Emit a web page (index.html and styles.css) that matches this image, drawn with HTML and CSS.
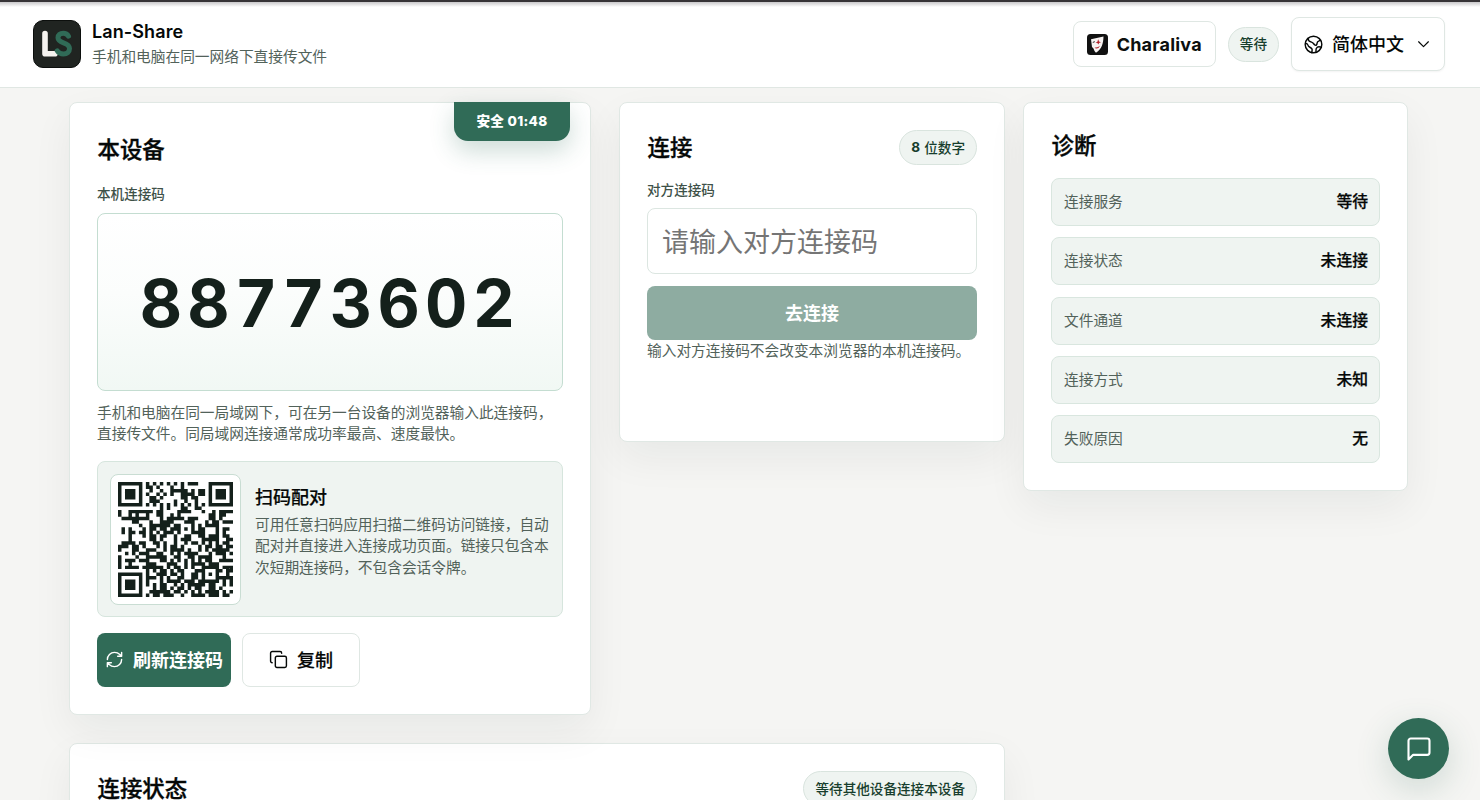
FILE: index.html
```html
<!DOCTYPE html>
<html lang="zh-CN">
<head>
    <meta charset="UTF-8">
    <meta name="viewport" content="width=device-width, initial-scale=1.0">
    <title>Lan-Share</title>
    <link rel="stylesheet" href="styles.css">
</head>
<body>
    <header class="header">
        <div class="brand">
            <svg class="logo" viewBox="0 0 48 48" fill="none" stroke-linecap="round" stroke-linejoin="round">
                <rect x="0.5" y="0.5" width="47" height="47" rx="9.5" fill="#202421" stroke="#0c0f0d"/>
                <path d="M12 13.500v20.200h10" stroke="#f5f3ef" stroke-width="5.600"/>
                <path d="M35.500 16.200c-1.300-2.200-3.300-2.900-5.200-2.900-3.300 0-5.300 1.700-5.300 4.500 0 6.500 11.500 3.400 11.500 10.800 0 3.500-2.500 5.400-6 5.400-2.700 0-4.900-.9-6.300-3.200" stroke="#306b57" stroke-width="5"/>
            </svg>
            <div>
                <h1>Lan-Share</h1>
                <p>手机和电脑在同一网络下直接传文件</p>
            </div>
        </div>
        <div class="header-actions">
            <a class="charaliva" href="#">
                <svg width="21" height="21" viewBox="0 0 21 21">
                    <rect width="21" height="21" rx="3.500" fill="#111"/>
                    <path d="M4 5.200L16.500 2.500C16.300 9 15 15 9 18.800 7.500 17.500 7 16 6.500 14.500L5 13z" fill="#f7f3f2"/>
                    <path d="M11.200 5.200l.8 2.400 2 .6-2 .9-.5 1.500-1.200-1.500-1.800-.2 1.900-1.200zM7.500 13.300q3 .8 5.500-1.600-1.500 3.500-4.300 2.800z" fill="#b3202a"/>
                    <path d="M5.800 8.400l2-.7" stroke="#222" stroke-width="1"/>
                </svg>
                Charaliva
            </a>
            <span class="pill">等待</span>
            <button class="language">
                <svg class="icon globe" viewBox="0 0 24 24">
                    <circle cx="12" cy="12" r="10.500"/>
                    <path d="M5 4.500c.5 3 2 4 4.500 4.500s2.500 2.500 4 3.500c2 1 3-.5 3-2s1-2.500 2.500-3l2-1M2 10.500c3 .5 3 2 3.500 3.500s3.500 1.500 4.500 3.500-.5 3 0 5M22 15.500c-3-1-5.500-.5-6.500 1.500-.7 1.500 0 3-.5 5"/>
                </svg>
                <span>简体中文</span>
                <svg class="icon chevron" viewBox="0 0 24 24"><path d="M3 7l9 9 9-9"/></svg>
            </button>
        </div>
    </header>

    <main class="container">
        <div class="left">
            <!-- This device -->
            <section class="card device">
                <div class="timer">安全 01:48</div>
                <h2>本设备</h2>
                <p class="label">本机连接码</p>
                <div class="code">88773602</div>
                <p class="text">手机和电脑在同一局域网下，可在另一台设备的浏览器输入此连接码，直接传文件。同局域网连接通常成功率最高、速度最快。</p>
                <div class="scan">
                    <div class="qr-box">
                        <svg id="qr" viewBox="0 0 33 33"></svg>
                    </div>
                    <div class="scan-info">
                        <h3>扫码配对</h3>
                        <p class="text">可用任意扫码应用扫描二维码访问链接，自动配对并直接进入连接成功页面。链接只包含本次短期连接码，不包含会话令牌。</p>
                    </div>
                </div>
                <div class="buttons">
                    <button class="btn primary refresh">
                        <svg class="icon" viewBox="0 0 24 24"><path d="M3 12a9 9 0 0 1 9-9 9.750 9.750 0 0 1 6.740 2.740L21 8M21 3v5h-5M21 12a9 9 0 0 1-9 9 9.750 9.750 0 0 1-6.740-2.740L3 16M8 16H3v5"/></svg>
                        <span>刷新连接码</span>
                    </button>
                    <button class="btn copy">
                        <svg class="icon" viewBox="0 0 24 24"><rect x="8" y="8" width="14" height="14" rx="2"/><path d="M4 16c-1.100 0-2-.9-2-2V4c0-1.100.9-2 2-2h10c1.100 0 2 .9 2 2"/></svg>
                        <span>复制</span>
                    </button>
                </div>
            </section>

            <!-- Connect to another device -->
            <section class="card connect">
                <div class="card-head">
                    <h2>连接</h2>
                    <span class="pill"><b>8</b>位数字</span>
                </div>
                <label class="label" for="peerCode">对方连接码</label>
                <input type="text" id="peerCode" placeholder="请输入对方连接码">
                <button class="btn primary" disabled><span>去连接</span></button>
                <p class="text">输入对方连接码不会改变本浏览器的本机连接码。</p>
            </section>

            <section class="card status">
                <div class="card-head">
                    <h2>连接状态</h2>
                    <span class="pill">等待其他设备连接本设备</span>
                </div>
            </section>
        </div>

        <!-- Diagnostics -->
        <section class="card diagnostics">
            <h2>诊断</h2>
            <div class="row"><span>连接服务</span><b>等待</b></div>
            <div class="row"><span>连接状态</span><b>未连接</b></div>
            <div class="row"><span>文件通道</span><b>未连接</b></div>
            <div class="row"><span>连接方式</span><b>未知</b></div>
            <div class="row"><span>失败原因</span><b>无</b></div>
        </section>
    </main>

    <button class="chat" aria-label="反馈">
        <svg class="icon" viewBox="0 0 24 24"><path d="M21 15a2 2 0 0 1-2 2H7l-4 4V5a2 2 0 0 1 2-2h14a2 2 0 0 1 2 2z"/></svg>
    </button>

    <script>
        var rows = [
            '#######.#.#.#.#.#.#.###...#######',
            '#.....#.##.#...#..#.......#.....#',
            '#.###.#..#..#..#####.#.##.#.###.#',
            '#.###.#.#..#.#.#..####.##.#.###.#',
            '#.###.#..##.#.....##.##...#.###.#',
            '#.....#..###....#..#..#...#.....#',
            '#######.#.#.#.#.#.#.#.#.#.#######',
            '............#.#...##..##.........',
            '#..#######.##....####...#..#.####',
            '#..#.#..#..##..#.#........##.##..',
            '.########...#.#####.###...##.#...',
            '....##...#..####...###...#.##.###',
            '......#..######.##...#.#.####....',
            '.#.#...#.##.##.###.#.#.##...#.##.',
            '.#.##.##.#.#.###.#...####...#.#..',
            '...#...#.##.##..#..##..##.###.##.',
            '...#.....##.#...#.###...#####..##',
            '.####.##..##.#..#..#.##.#.#.#.##.',
            '###.##.#...#.#.##.#....#.##.##.##',
            '#...##..###..#.####.#..#.#.#####.',
            '..#.#.###..##..#.#.####...#.###.#',
            '#....#..######..##..##.####...#..',
            '#.###.###...##.#.#.#.#.#.##..####',
            '#..#....###...###..#.####.###....',
            '#.####.######.#.##.#.#..#####.###',
            '........#.#.##.#.##...###...##.##',
            '#######.#..###.##.#..##.#.#.#..#.',
            '#.....#.###.#.#..##..##.#...#####',
            '#.###.#.#...#.####.###.######.#.#',
            '#.###.#.#.#.##..#.#.#####.##..#.#',
            '#.###.#...#.##.#.##.#.##..##.#...',
            '#.....#..######.##.#.#.#.####.#.#',
            '#######.#.##.###..#..####.###.##.'
        ];
        var path = '';
        rows.forEach(function (row, y) {
            for (var x = 0; x < row.length; x++) {
                if (row[x] == '#') path += 'M' + x + ' ' + y + 'h1v1h-1z';
            }
        });
        document.getElementById('qr').innerHTML = '<path fill="#14201b" d="' + path + '"/>';
    </script>
</body>
</html>
```
FILE: styles.css
```css
* {
    box-sizing: border-box;
}
body {
    font-family: Inter, "Noto Sans CJK SC", sans-serif;
    margin: 0;
    height: 800px;
    overflow: hidden;
    background-color: #f5f5f3;
    color: #050807;
}
h1, h2, h3, p {
    margin: 0;
}
button, input {
    font-family: inherit;
    color: inherit;
}
.icon {
    width: 19px;
    height: 19px;
    fill: none;
    stroke: currentColor;
    stroke-width: 1.8;
    stroke-linecap: round;
    stroke-linejoin: round;
    flex-shrink: 0;
}
.header {
    height: 88px;
    padding: 0 35px 1px 33px;
    background: linear-gradient(#c9c8ca, #fff 5px);
    border-top: 2px solid #373437;
    border-bottom: 1px solid #e0e7e3;
    display: flex;
    justify-content: space-between;
    align-items: center;
}
.brand {
    display: flex;
    align-items: center;
    gap: 11px;
}
.logo {
    width: 48px;
    height: 48px;
}
.brand h1 {
    font-size: 18px;
    font-weight: 600;
    line-height: 25px;
    letter-spacing: 0.1px;
}
.brand p {
    margin-top: 1px;
    font-size: 14.7px;
    line-height: 25px;
    color: #52625a;
}
.header-actions {
    display: flex;
    align-items: center;
    gap: 12px;
}
.charaliva {
    display: flex;
    align-items: center;
    gap: 9px;
    height: 46px;
    padding: 0 13px;
    border: 1px solid #dfe7e3;
    border-radius: 8px;
    color: #0c100e;
    font-size: 18px;
    font-weight: 700;
    letter-spacing: 0.2px;
    text-decoration: none;
}
.pill {
    display: flex;
    align-items: center;
    gap: 4px;
    height: 35px;
    padding: 0 11px 2px;
    border: 1px solid #d9e4de;
    border-radius: 18px;
    background-color: #eff4f1;
    color: #173e2d;
    font-size: 13.6px;
    font-weight: 500;
    white-space: nowrap;
}
.language {
    display: flex;
    align-items: center;
    width: 154px;
    height: 54px;
    padding: 0 12px;
    border: 1px solid #dfe7e3;
    border-radius: 8px;
    background-color: #fff;
    box-shadow: 0 1px 2px rgba(0, 0, 0, 0.05);
    font-size: 18px;
    font-weight: 500;
    white-space: nowrap;
}
.language span,
.btn span {
    margin-top: -2px;
}
.globe {
    margin-right: 9px;
}
.chevron {
    width: 13px;
    height: 13px;
    margin-left: auto;
    margin-right: 2px;
    stroke-width: 2.2;
}
.container {
    display: grid;
    grid-template-columns: 936px 385px;
    align-items: start;
    gap: 18px;
    padding: 14px 0 0 69px;
}
.left {
    display: grid;
    grid-template-columns: 522px 386px;
    align-items: start;
    gap: 28px;
}
.card {
    padding: 27px;
    background-color: #fff;
    border: 1px solid #e0e8e4;
    border-radius: 8px;
    box-shadow: 0 16px 40px rgba(20, 40, 30, 0.06);
}
.card h2 {
    font-size: 22.4px;
    font-weight: 500;
    line-height: 34px;
    text-indent: 0.5px;
    -webkit-text-stroke: 0.35px currentColor;
}
.card-head {
    display: flex;
    align-items: center;
    justify-content: space-between;
}
.label {
    display: block;
    font-size: 13.6px;
    font-weight: 500;
    line-height: 20px;
    color: #3e5148;
}
.text {
    font-size: 14.7px;
    line-height: 21.4px;
    color: #52625a;
}
.device {
    position: relative;
    height: 613px;
}
.device h2 {
    margin-top: 3px;
}
.device .label {
    margin: 17px 0 9px;
}
.timer {
    position: absolute;
    top: -1px;
    right: 20px;
    width: 116px;
    height: 39px;
    border-radius: 0 0 14px 14px;
    background-color: #306b57;
    box-shadow: 0 10px 24px rgba(48, 107, 87, 0.24);
    color: #fff;
    font-size: 13.6px;
    font-weight: 800;
    line-height: 38px;
    letter-spacing: 0.3px;
    text-align: center;
}
.code {
    height: 178px;
    border: 1px solid #c4ddd1;
    border-radius: 8px;
    background: linear-gradient(#fff, #fbfdfc 45%, #f1f8f4);
    color: #14201b;
    font-size: 65.5px;
    font-weight: 700;
    font-variant-numeric: tabular-nums;
    line-height: 180px;
    letter-spacing: 5.2px;
    text-align: center;
}
.code + .text {
    margin-top: 12px;
}
.scan {
    display: flex;
    gap: 14px;
    height: 156px;
    margin-top: 15px;
    padding: 12px;
    border: 1px solid #d6e5dd;
    border-radius: 8px;
    background-color: #eff4f1;
}
.qr-box {
    flex-shrink: 0;
    width: 131px;
    height: 131px;
    padding: 7px;
    border: 1px solid #c9ddd3;
    border-radius: 8px;
    background-color: #fff;
}
.qr-box svg {
    display: block;
    width: 115px;
    height: 115px;
}
.scan-info {
    width: 300px;
    margin-right: -6px;
}
.scan-info h3 {
    margin-top: 11px;
    font-size: 18px;
    font-weight: 500;
    line-height: 26px;
    -webkit-text-stroke: 0.2px currentColor;
}
.scan-info .text {
    margin-top: 4px;
}
.buttons {
    display: flex;
    gap: 11px;
    margin-top: 16px;
}
.btn {
    display: flex;
    align-items: center;
    justify-content: center;
    gap: 9px;
    height: 54px;
    padding: 0;
    border: 1px solid #dfe7e3;
    border-radius: 8px;
    background-color: #fff;
    font-size: 18px;
    font-weight: 500;
    white-space: nowrap;
}
.btn.primary {
    border: none;
    background-color: #306b57;
    color: #fff;
    font-weight: 700;
}
.btn.primary:disabled {
    width: 100%;
    background-color: #8eaca1;
}
.refresh {
    width: 134px;
}
.copy {
    width: 118px;
    -webkit-text-stroke: 0.2px currentColor;
}
.connect {
    height: 340px;
}
.connect .label {
    margin: 15px 0 8px;
}
.connect input {
    display: block;
    width: 100%;
    height: 66px;
    margin-bottom: 12px;
    padding: 2px 15px 0 14px;
    border: 1px solid #dce6e1;
    border-radius: 8px;
    background-color: #fff;
    font-size: 27px;
}
.connect input::placeholder {
    color: #757575;
}
.connect .text {
    margin-top: 1px;
}
.status {
    grid-column: 1 / 3;
    height: 200px;
}
.diagnostics h2 {
    margin: -1px 0 15px;
}
.row {
    display: flex;
    align-items: center;
    justify-content: space-between;
    height: 48px;
    margin-bottom: 11.3px;
    padding: 0 11px 3px 12px;
    border: 1px solid #d9e6df;
    border-radius: 8px;
    background-color: #eff4f1;
}
.row:last-child {
    margin-bottom: 0;
}
.row span {
    color: #52625a;
    font-size: 14.7px;
}
.row b {
    font-size: 15.8px;
    font-weight: 500;
    -webkit-text-stroke: 0.25px currentColor;
}
.chat {
    position: fixed;
    right: 31px;
    bottom: 21px;
    display: flex;
    align-items: center;
    justify-content: center;
    width: 61px;
    height: 61px;
    padding: 0;
    border: none;
    border-radius: 50%;
    background-color: #306b57;
    box-shadow: 0 10px 34px rgba(48, 107, 87, 0.2);
    color: #fff;
}
.chat .icon {
    width: 28px;
    height: 28px;
}
```
